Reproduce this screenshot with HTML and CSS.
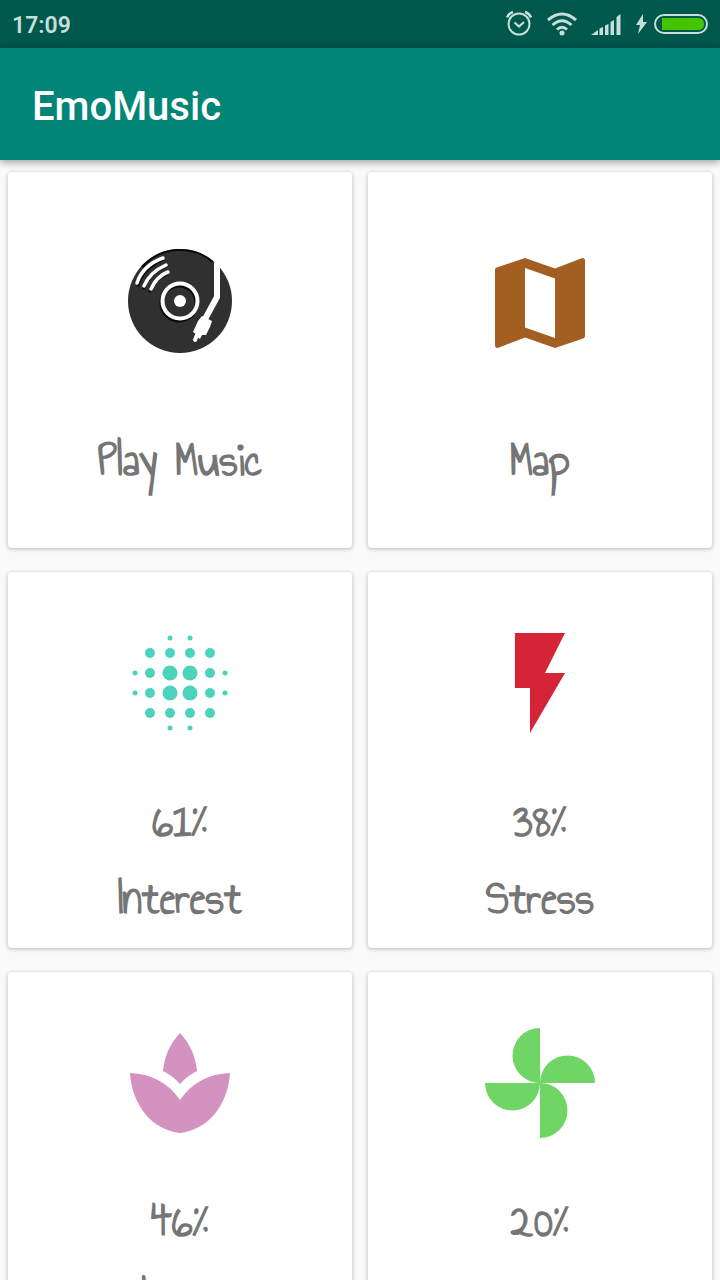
FILE: index.html
```html
<!DOCTYPE html>
<html lang="en">
<head>
<meta charset="utf-8">
<meta name="viewport" content="width=device-width, initial-scale=1">
<title>EmoMusic</title>
<link rel="stylesheet" href="styles.css">
</head>
<body>
<div class="app">
  <div class="status-bar">
    <time class="clock">17:09</time>
    <div class="status-icons">
      <svg width="28" height="28" viewBox="0 0 28 28" fill="none" stroke="currentColor" stroke-width="2" aria-label="Alarm">
        <circle cx="14" cy="14" r="10.500"/><path d="M9.500 12.500l4.500 4 5-4.500" stroke-width="2.200"/><path d="M2 7.500q1.500-4 6-5.500M26 7.500q-1.500-4-6-5.500" stroke-width="2.500"/>
      </svg>
      <svg width="32" height="28" viewBox="0 0 32 28" fill="none" stroke="currentColor" stroke-width="3" aria-label="Wi-Fi">
        <path d="M2 10q14-12 28 0M6.500 15q9.500-8.500 19 0M11 19.500q5-4.500 10 0"/><circle cx="16" cy="23" r="2.500" fill="currentColor" stroke="none"/>
      </svg>
      <svg width="32" height="28" viewBox="0 0 32 28" fill="currentColor" aria-label="Signal">
        <path d="M0 25l7-5v5zM8.500 18.500l3.500-1.500v8H8.500zM14 15.500l3.500-1.500v11H14zM19.500 12l3.500-2v15h-3.500zM25.500 7l4-3v21h-4z"/>
      </svg>
      <svg width="12" height="28" viewBox="0 0 12 28" fill="currentColor" aria-label="Charging"><path d="M7 4L0 15h4L2 24l9-12H7z"/></svg>
      <svg width="56" height="28" viewBox="0 0 56 28" aria-label="Battery">
        <rect x="2" y="5" width="52" height="18" rx="9" fill="none" stroke="currentColor" stroke-width="2"/>
        <path d="M9 8h36q6 0 6 6t-6 6H9z" fill="#46c400"/>
      </svg>
    </div>
  </div>
  <header class="toolbar"><h1 class="title">EmoMusic</h1></header>
  <main class="grid">
    <button class="card card-action" type="button">
      <svg class="icon" viewBox="0 0 120 120" aria-hidden="true">
        <circle cx="60" cy="58" r="52" fill="#303030"/>
        <path d="M22 24A51 51 0 0 1 93 19" fill="none" stroke="#080808" stroke-width="2"/>
        <g fill="none" stroke="#080808" stroke-linecap="round" transform="translate(-1 2)">
          <path d="M19 40Q24 24 43 15M25 43Q30 29 45 22M31 46Q37 33 48 29" stroke-width="3"/>
          <circle cx="60" cy="58" r="17.500" stroke-width="4"/>
        </g>
        <g fill="none" stroke="#fff" stroke-linecap="round">
          <path d="M17 40Q23 22 43 15M24 43Q30 29 46 22M31 46Q37 33 48 29" stroke-width="3.500"/>
          <circle cx="60" cy="58" r="17.500" stroke-width="4"/>
          <path d="M97 19v35L84 78" stroke-width="6" stroke-linecap="butt"/>
          <path d="M77 92l-2 5" stroke-width="4"/>
        </g>
        <circle cx="60" cy="58" r="6" fill="#fff"/>
        <path d="M94 4v22h6V4zM82 73l10 5-2 6-4 8h-4l-2 4-3-2-1-3-3-2 5-11z" fill="#fff"/>
      </svg>
      <span class="label">Play Music</span>
    </button>
    <button class="card card-action" type="button">
      <svg class="icon" viewBox="0 0 24 24" fill="#a35f22" aria-hidden="true"><path d="M20.500 3l-.16.03L15 5.100 9 3 3.360 4.900c-.21.07-.36.25-.36.48V20.500c0 .28.22.5.5.5l.16-.03L9 18.900l6 2.100 5.640-1.900c.21-.07.36-.25.36-.48V3.500c0-.28-.22-.5-.5-.5zM15 19l-6-2.110V5l6 2.110V19z"/></svg>
      <span class="label">Map</span>
    </button>
    <button class="card" type="button">
      <svg class="icon" viewBox="0 0 24 24" fill="#4bd3bb" aria-hidden="true">
        <g><circle cx="10" cy="3" r=".5"/><circle cx="14" cy="3" r=".5"/><circle cx="10" cy="21" r=".5"/><circle cx="14" cy="21" r=".5"/><circle cx="3" cy="10" r=".5"/><circle cx="3" cy="14" r=".5"/><circle cx="21" cy="10" r=".5"/><circle cx="21" cy="14" r=".5"/></g>
        <g><circle cx="6" cy="6" r="1"/><circle cx="10" cy="6" r="1"/><circle cx="14" cy="6" r="1"/><circle cx="18" cy="6" r="1"/><circle cx="6" cy="10" r="1"/><circle cx="18" cy="10" r="1"/><circle cx="6" cy="14" r="1"/><circle cx="18" cy="14" r="1"/><circle cx="6" cy="18" r="1"/><circle cx="10" cy="18" r="1"/><circle cx="14" cy="18" r="1"/><circle cx="18" cy="18" r="1"/></g>
        <g><circle cx="10" cy="10" r="1.500"/><circle cx="14" cy="10" r="1.500"/><circle cx="10" cy="14" r="1.500"/><circle cx="14" cy="14" r="1.500"/></g>
      </svg>
      <span class="value">61%</span>
      <span class="label">Interest</span>
    </button>
    <button class="card" type="button">
      <svg class="icon" viewBox="0 0 24 24" fill="#d52438" aria-hidden="true"><path d="M7 2v11h3v9l7-12h-4l4-8z"/></svg>
      <span class="value">38%</span>
      <span class="label">Stress</span>
    </button>
    <button class="card" type="button">
      <svg class="icon" viewBox="0 0 120 120" fill="#d492c0" aria-hidden="true"><path d="M60 10Q75 26 77 48Q67 53 60 61Q53 53 43 48Q45 26 60 10zM10 50Q42 51 60 77Q78 51 110 50C108 82 88 107 60 110C32 107 12 82 10 50z"/></svg>
      <span class="value">46%</span>
      <span class="label">Relaxation</span>
    </button>
    <button class="card" type="button">
      <svg class="icon" viewBox="0 0 120 120" fill="#6fd665" aria-hidden="true"><path d="M60 60V5a27.500 27.500 0 0 0 0 55zM60 60h55a27.500 27.500 0 0 0-55 0zM60 60v55a27.500 27.500 0 0 0 0-55zM60 60H5a27.500 27.500 0 0 0 55 0z"/></svg>
      <span class="value">20%</span>
    </button>
  </main>
</div>
</body>
</html>
```
FILE: styles.css
```css
* {
  box-sizing: border-box;
}

body {
  margin: 0;
  background: #fafafa;
  font-family: Roboto, "Liberation Sans", sans-serif;
}

.app {
  display: flex;
  flex-direction: column;
  height: 100vh;
  overflow: hidden;
}

.status-bar {
  display: flex;
  flex: none;
  align-items: center;
  justify-content: space-between;
  height: 48px;
  padding: 0 11px 0 12px;
  background: #00574b;
  color: #c6dfda;
}

.clock {
  padding-top: 3px;
  font-size: 23px;
  font-weight: 600;
  line-height: 28px;
}

.status-icons {
  display: flex;
  align-items: center;
  gap: 13px;
}

.status-icons svg {
  display: block;
}

.status-icons svg:last-child {
  margin-left: -8px;
}

.toolbar {
  position: relative;
  z-index: 1;
  display: flex;
  flex: none;
  align-items: center;
  height: 112px;
  padding: 6px 32px 0;
  background: #008577;
  box-shadow: 0 2px 8px rgba(0, 0, 0, 0.4);
}

.title {
  margin: 0;
  color: #fff;
  font-size: 40px;
  font-weight: 500;
  line-height: 48px;
}

.grid {
  display: grid;
  flex: 1;
  grid-template-columns: 1fr 1fr;
  grid-auto-rows: 376px;
  gap: 24px 16px;
  min-height: 0;
  padding: 12px 8px;
  overflow: hidden;
}

.card {
  display: flex;
  flex-direction: column;
  align-items: center;
  padding: 51px 8px 0;
  border: 0;
  border-radius: 4px;
  background: #fff;
  box-shadow: 0 1px 4px rgba(0, 0, 0, 0.28);
  color: #757575;
  font-family: "Annie Use Your Telescope", "Liberation Sans Narrow", Roboto, sans-serif;
  font-size: 48px;
  font-weight: 700;
  line-height: 48px;
}

.card-action {
  padding-top: 71px;
}

.icon {
  flex: none;
  width: 120px;
  height: 120px;
}

.value {
  margin-top: 55px;
}

.label {
  margin-top: 29px;
}

.card-action .label {
  margin-top: 74px;
}
```
